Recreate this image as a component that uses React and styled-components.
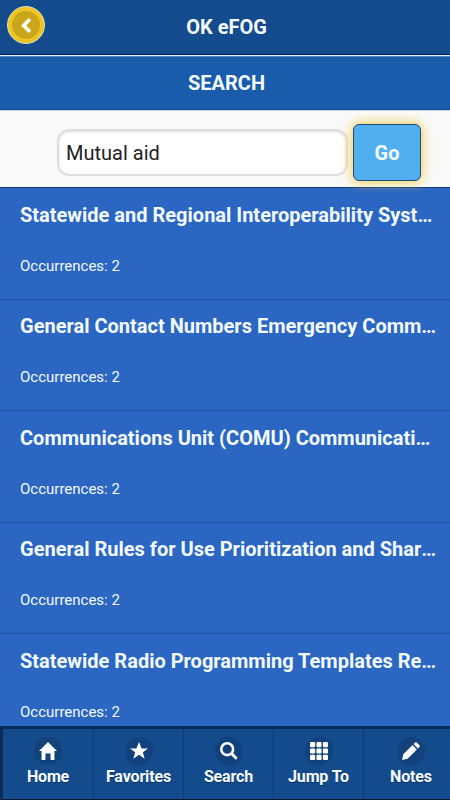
import React, { useState } from "react";
import styled, { createGlobalStyle } from "styled-components";

const GlobalStyle = createGlobalStyle`
  * {
    box-sizing: border-box;
  }

  body {
    margin: 0;
    font-family: Roboto, "Liberation Sans", sans-serif;
    background: #2a66c2;
  }
`;

const Page = styled.div`
  display: flex;
  flex-direction: column;
  width: 100%;
  height: 100vh;
  overflow: hidden;
`;

const Header = styled.header`
  display: grid;
  grid-template-columns: 54px 1fr 51px;
  align-items: center;
  flex: none;
  height: 55px;
  border-bottom: 1px solid #05185a;
  background: #144b8c;
`;

const Title = styled.h1`
  margin: 0;
  padding-bottom: 1px;
  color: #f4fbff;
  font-size: 20px;
  line-height: 24px;
  font-weight: 700;
  text-align: center;
`;

const BackButton = styled.button`
  display: flex;
  align-items: center;
  justify-content: center;
  width: 38px;
  height: 38px;
  margin: 0 0 4px 7px;
  padding: 0;
  border: 1px solid #e2dfbd;
  border-radius: 50%;
  background: radial-gradient(circle, #cba61b 13.5px, #efc526 14.5px);
`;

const SubHeader = styled.div`
  flex: none;
  height: 55px;
  border-top: 1px solid #e6f0fa;
  border-bottom: 1px solid #124a88;
  background: #185cab;
  box-shadow: inset 0 1px #5586b9;
  color: #f4fbff;
  font-size: 20px;
  line-height: 55px;
  font-weight: 700;
  text-align: center;
  padding-left: 3px;
`;

const SearchForm = styled.form`
  display: flex;
  align-items: center;
  flex: none;
  height: 78px;
  padding: 7px 29px 0 57px;
  border-top: 1px solid #c4d9eb;
  border-bottom: 1px solid #123a70;
  background: #f9f9f9;
`;

const SearchInput = styled.input`
  width: 291px;
  height: 47px;
  margin-right: 5px;
  padding: 0 7px;
  border: 2px solid #dedede;
  border-radius: 12px;
  outline: none;
  background: #fff;
  box-shadow: inset 0 1px 3px rgba(0, 0, 0, 0.14);
  color: #222;
  font-family: inherit;
  font-size: 20px;
`;

const GoButton = styled.button`
  position: relative;
  width: 68px;
  height: 57px;
  padding: 0;
  border: 1px solid #1d4c7d;
  border-radius: 6px;
  background: #52afef;
  box-shadow: 0 0 12px 1px #f3cc48;
  color: #f5fcff;
  font-family: inherit;
  font-size: 20px;
  font-weight: 700;
`;

const ResultList = styled.ul`
  flex: 1;
  min-height: 0;
  margin: 0;
  padding: 0;
  overflow: hidden;
  list-style: none;
`;

const ResultItem = styled.li`
  height: 111.5px;
  padding: 13.5px 13px 0 20px;
  border-bottom: 1px solid #1d50a2;
  color: #f2faff;
`;

const ResultTitle = styled.h2`
  margin: 0;
  overflow: hidden;
  font-size: 20px;
  line-height: 26px;
  font-weight: 700;
  text-overflow: ellipsis;
  white-space: nowrap;
`;

const ResultCount = styled.p`
  margin: 28px 0 0;
  font-size: 15px;
  line-height: 20px;
`;

const NavBar = styled.nav`
  display: grid;
  grid-template-columns: 91px 90px 90px 90px 95px;
  flex: none;
  height: 74px;
  border-top: 3px solid #0b2c5a;
  border-bottom: 1px solid #071a33;
  border-left: 3px solid #0b2c5a;
  background: #144b8c;
`;

const NavItem = styled.a`
  display: flex;
  flex-direction: column;
  align-items: center;
  padding-top: 8px;
  border-right: 1px solid #0e3c74;
  color: #f7fcff;
  font-size: 16px;
  line-height: 20px;
  font-weight: 700;
  letter-spacing: -0.15px;
  text-shadow: 0 1px 0 #0c3265;
`;

const IconDisc = styled.span`
  display: flex;
  align-items: center;
  justify-content: center;
  width: 28px;
  height: 28px;
  margin-bottom: 2px;
  border-radius: 50%;
  background: #12417b;
`;

const Icon = ({ children, size = 18 }) => (
  <svg width={size} height={size} viewBox="0 0 14 14" fill="#fff">
    {children}
  </svg>
);

const HomeIcon = () => (
  <Icon>
    <path d="M7 0 0 7h2v7h3V9h4v5h3V7h2z" />
  </Icon>
);

const StarIcon = () => (
  <Icon>
    <path d="M14 5H9L7 0 5 5H0l4 3-1.4 5L7 10l4.4 3L10 8z" />
  </Icon>
);

const SearchIcon = () => (
  <Icon>
    <circle cx="5.6" cy="5.6" r="4.6" fill="none" stroke="#fff" strokeWidth="2" />
    <path d="m9 9 4 4" stroke="#fff" strokeWidth="2.2" />
  </Icon>
);

const GridIcon = () => (
  <Icon>
    {[0, 5, 10].map((y) =>
      [0, 5, 10].map((x) => (
        <rect key={`${x}-${y}`} x={x} y={y} width="4" height="4" rx="0.8" />
      ))
    )}
  </Icon>
);

const EditIcon = () => (
  <Icon>
    <path d="M1 9.6 8.2 2.4l3.4 3.4L4.4 13 0 14zM9 1.6 10.2.4q.6-.6 1.2 0l2.2 2.2q.6.6 0 1.2L12.4 5z" />
  </Icon>
);

const results = [
  "Statewide and Regional Interoperability Systems",
  "General Contact Numbers Emergency Communications",
  "Communications Unit (COMU) Communications",
  "General Rules for Use Prioritization and Shared Use",
  "Statewide Radio Programming Templates Regions",
];

const navItems = [
  { label: "Home", icon: HomeIcon },
  { label: "Favorites", icon: StarIcon },
  { label: "Search", icon: SearchIcon },
  { label: "Jump To", icon: GridIcon },
  { label: "Notes", icon: EditIcon },
];

export default function App() {
  const [query, setQuery] = useState("Mutual aid");

  return (
    <Page>
      <GlobalStyle />
      <Header>
        <BackButton aria-label="Back">
          <Icon size={15}>
            <path d="M10.2 1.2 4.3 7l5.9 5.8" fill="none" stroke="#fff" strokeWidth="3.3" />
          </Icon>
        </BackButton>
        <Title>OK eFOG</Title>
      </Header>
      <SubHeader>SEARCH</SubHeader>
      <SearchForm onSubmit={(e) => e.preventDefault()}>
        <SearchInput value={query} onChange={(e) => setQuery(e.target.value)} />
        <GoButton>Go</GoButton>
      </SearchForm>
      <ResultList>
        {results.map((title) => (
          <ResultItem key={title}>
            <ResultTitle>{title}</ResultTitle>
            <ResultCount>Occurrences: 2</ResultCount>
          </ResultItem>
        ))}
      </ResultList>
      <NavBar>
        {navItems.map(({ label, icon: NavIcon }) => (
          <NavItem key={label}>
            <IconDisc>
              <NavIcon />
            </IconDisc>
            {label}
          </NavItem>
        ))}
      </NavBar>
    </Page>
  );
}
